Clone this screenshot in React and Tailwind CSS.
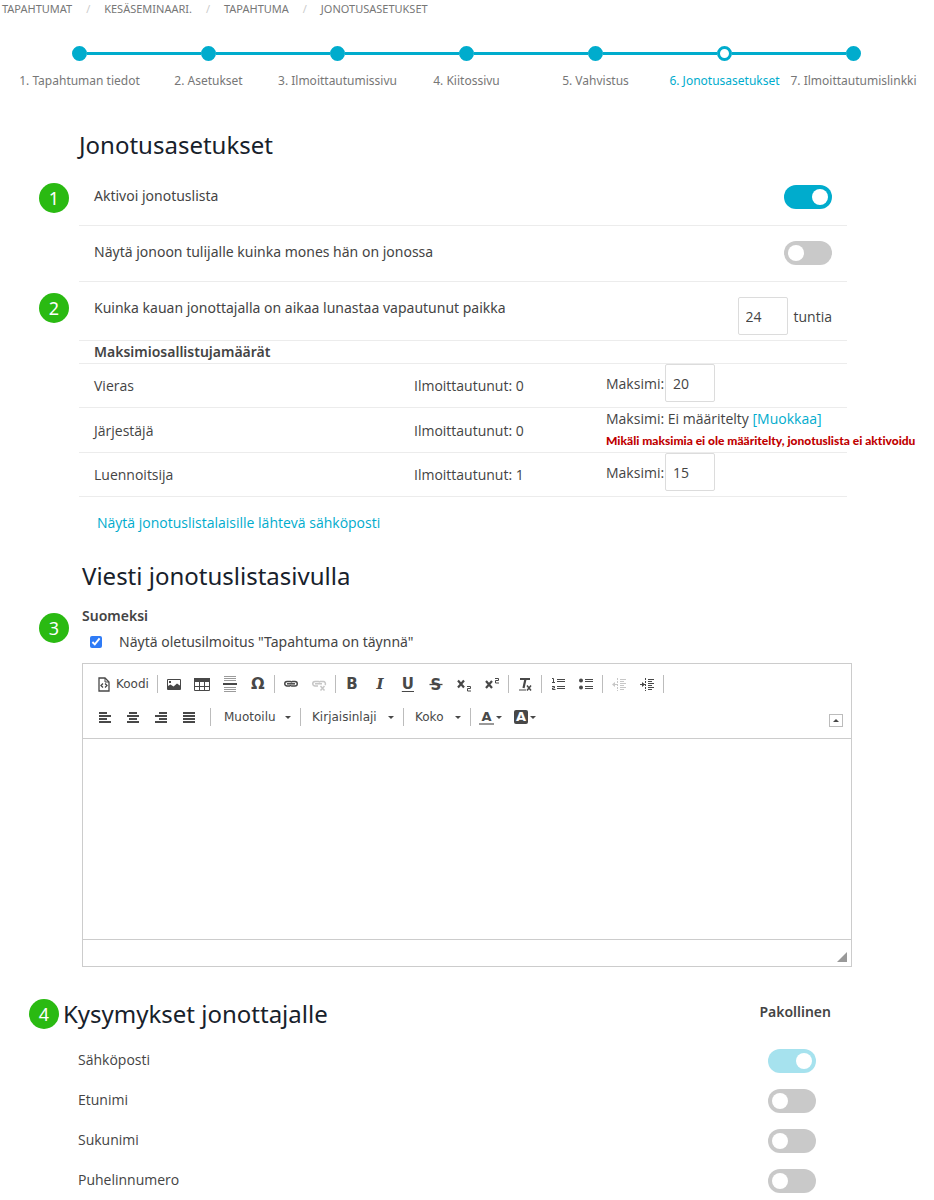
import { useState } from "react";
import clsx from "clsx";

const steps = [
  "1. Tapahtuman tiedot",
  "2. Asetukset",
  "3. Ilmoittautumissivu",
  "4. Kiitossivu",
  "5. Vahvistus",
  "6. Jonotusasetukset",
  "7. Ilmoittautumislinkki",
];
const currentStep = 5;

const crumbs = ["Tapahtumat", "Kesäseminaari.", "Tapahtuma", "Jonotusasetukset"];

const groups = [
  { id: "vieras", name: "Vieras", registered: 0, max: "20" },
  { id: "jarjestaja", name: "Järjestäjä", registered: 0, max: null },
  { id: "luennoitsija", name: "Luennoitsija", registered: 1, max: "15" },
];

const questions = [
  { id: "email", label: "Sähköposti", locked: true },
  { id: "firstname", label: "Etunimi" },
  { id: "lastname", label: "Sukunimi" },
  { id: "phone", label: "Puhelinnumero" },
];

const Badge = ({ children, className }) => (
  <span
    className={clsx(
      "flex size-[30px] shrink-0 items-center justify-center rounded-full bg-[#2aba12] text-lg text-white",
      className
    )}
  >
    {children}
  </span>
);

const Toggle = ({ id, defaultChecked, disabled }) => (
  <input
    id={id}
    type="checkbox"
    role="switch"
    defaultChecked={defaultChecked}
    disabled={disabled}
    className="h-6 w-12 shrink-0 appearance-none rounded-full bg-[#c9c9c9] p-1 before:block before:size-4 before:rounded-full before:bg-white checked:bg-[#00accd] checked:before:ml-6 disabled:bg-[#a6e2ee]"
  />
);

const NumberBox = ({ id, value }) => (
  <input
    id={id}
    type="text"
    inputMode="numeric"
    defaultValue={value}
    className="h-[38px] w-[50px] rounded-xs border border-[#dcdcdc] bg-white px-[7px]"
  />
);

const Breadcrumb = () => (
  <nav aria-label="Murupolku" className="pl-0.5">
    <ol className="flex text-[11px] leading-[18px] text-[#777] uppercase">
      {crumbs.map((c, i) => (
        <li key={c} className="flex">
          {i > 0 && <span className="w-8 text-center text-[#ccc]">/</span>}
          <a href="#">{c}</a>
        </li>
      ))}
    </ol>
  </nav>
);

const Stepper = () => (
  <ol className="mr-4 ml-[15px] mt-7 grid grid-cols-7">
    {steps.map((s, i) => (
      <li key={s} className="flex flex-col items-center">
        <div className="flex w-full items-center">
          <span className={clsx("h-[3px] flex-1", i > 0 && "bg-[#00accd]")} />
          <span
            className={clsx(
              "size-[15px] rounded-full border-3 border-[#00accd]",
              i === currentStep ? "bg-white" : "bg-[#00accd]"
            )}
          />
          <span
            className={clsx(
              "h-[3px] flex-1",
              i < steps.length - 1 && "bg-[#00accd]"
            )}
          />
        </div>
        <a
          href="#"
          aria-current={i === currentStep ? "step" : undefined}
          className={clsx(
            "mt-2.5 text-[12px] leading-5 whitespace-nowrap",
            i === currentStep ? "text-[#00accd]" : "text-[#777]"
          )}
        >
          {s}
        </a>
      </li>
    ))}
  </ol>
);

const SettingRow = ({ id, label, badge, badgeClass, children, className }) => (
  <div
    className={clsx(
      "relative flex items-start justify-between border-b border-[#ececec] px-[15px] pt-[15px]",
      className
    )}
  >
    {badge && (
      <Badge className={clsx("absolute -left-10", badgeClass)}>{badge}</Badge>
    )}
    <label htmlFor={id} className="text-[14px] leading-[22px]">
      {label}
    </label>
    {children}
  </div>
);

const GroupTable = () => (
  <table className="w-full table-fixed text-left text-[14px]">
    <thead>
      <tr className="border-b border-[#ececec]">
        <th className="w-5/12 px-[15px] py-0 leading-[22px] font-semibold">
          Maksimiosallistujamäärät
        </th>
        <th className="w-3/12" />
        <th className="w-4/12" />
      </tr>
    </thead>
    <tbody className="font-['Open_Sans',sans-serif]">
      {groups.map((g) => (
        <tr key={g.id} className="h-[44px] border-b border-[#ececec]">
          <td className="px-[15px]">{g.name}</td>
          <td className="px-[15px]">Ilmoittautunut: {g.registered}</td>
          <td className="pl-[15px] align-top whitespace-nowrap">
            {g.max ? (
              <div className="flex items-center gap-px">
                <label htmlFor={g.id}>Maksimi:</label>
                <NumberBox id={g.id} value={g.max} />
              </div>
            ) : (
              <>
                <p className="leading-[22px]">
                  Maksimi: Ei määritelty{" "}
                  <a href="#" className="text-[#00accd]">
                    [Muokkaa]
                  </a>
                </p>
                <p className="font-['Lato',sans-serif] text-[12px] leading-[22px] font-black text-[#c00000] [font-variant-ligatures:none]">
                  Mikäli maksimia ei ole määritelty, jonotuslista ei aktivoidu
                </p>
              </>
            )}
          </td>
        </tr>
      ))}
    </tbody>
  </table>
);

const Icon = ({ children }) => (
  <svg
    viewBox="0 0 16 16"
    className="size-4 shrink-0"
    fill="none"
    stroke="currentColor"
    aria-hidden="true"
  >
    {children}
  </svg>
);

const icons = {
  source: (
    <Icon>
      <path d="M3 2h6l4 4v9h-10z" strokeWidth="1.3" />
      <path d="M9 2v4h4" />
      <path d="M7 7.500l-2 2 2 2M9 7.500l2 2-2 2" strokeWidth="1.300" />
    </Icon>
  ),
  image: (
    <Icon>
      <path d="M1.500 3.500h13v10h-13z" />
      <path d="M2 13v-3l2.500-1.500 3 2 3.500-3 3.500 2.500v3z" fill="currentColor" stroke="none" />
      <path d="M3 5h2v2h-2z" fill="currentColor" stroke="none" />
    </Icon>
  ),
  table: (
    <Icon>
      <path d="M0 2h16v4h-16z" fill="currentColor" stroke="none" />
      <path d="M.5 3v11.500h15v-11.500M0 10.500h16M5.500 6v8.500M10.500 6v8.500" />
    </Icon>
  ),
  rule: (
    <Icon>
      <path d="M2 .5h12M2 2.500h12M2 4.500h12M2 11.500h12M2 13.500h12M2 15.500h12" strokeOpacity=".55" />
      <path d="M1 8h14" strokeWidth="2" />
    </Icon>
  ),
  link: (
    <Icon>
      <path d="M7 10h-3a2.200 2.200 0 0 1 0-4.500h3a2 2 0 0 1 2 1M9 5.500h3a2.200 2.200 0 0 1 0 4.500h-3a2 2 0 0 1-2-1" strokeWidth="1.500" />
      <path d="M4 7.800h8" strokeWidth="1.500" />
    </Icon>
  ),
  unlink: (
    <Icon>
      <path d="M7 10h-3a2.200 2.200 0 0 1 0-4.500h3a2 2 0 0 1 2 1M9 5.500h3a2.200 2.200 0 0 1 2 3.500M4 7.800h7" strokeWidth="1.500" />
      <path d="M9.500 10l4 4.500M13.500 10l-4 4.500" strokeWidth="1.500" />
    </Icon>
  ),
  strike: (
    <Icon>
      <text x="8" y="13.500" textAnchor="middle" fontSize="15" fontWeight="700" fill="currentColor" stroke="none">
        S
      </text>
      <path d="M1.500 8.500h13" strokeWidth="1.300" />
    </Icon>
  ),
  sub: (
    <Icon>
      <path d="M2 4.500l6 7M8 4.500l-6 7" strokeWidth="2.200" />
      <path d="M11 10.500h3.500v2h-3v2.500h3.500" />
    </Icon>
  ),
  sup: (
    <Icon>
      <path d="M2 5l6 7M8 5l-6 7" strokeWidth="2.200" />
      <path d="M11 2.500h3.500v2h-3v2.500h3.500" />
    </Icon>
  ),
  clear: (
    <Icon>
      <path d="M3 3h10M8.500 3l-2 9" strokeWidth="2.200" />
      <path d="M2 14h7" />
      <path d="M10 9.500l4 5M14 9.500l-4 5" strokeWidth="1.500" />
    </Icon>
  ),
  numbered: (
    <Icon>
      <path d="M2 2.500h1.500v4M2 6.500h3M2 10.500h2.500v1.500h-2v1.500h3M7 3.500h8M7 5.500h8M7 10.500h8M7 12.500h8" />
    </Icon>
  ),
  bulleted: (
    <Icon>
      <path d="M7 3.500h8M7 5.500h8M7 10.500h8M7 12.500h8" />
      <circle cx="3" cy="4.500" r="2" fill="currentColor" stroke="none" />
      <circle cx="3" cy="11.500" r="2" fill="currentColor" stroke="none" />
    </Icon>
  ),
  outdent: (
    <Icon>
      <path d="M9 3.500h6M9 5.500h4M9 7.500h6M9 9.500h4M9 11.500h6M9 13.500h4M2 8.500h5" />
      <path d="M6.500 2v13" strokeDasharray="2 1" />
      <path d="M1 8.500l3-2.500v5z" fill="currentColor" stroke="none" />
    </Icon>
  ),
  indent: (
    <Icon>
      <path d="M9 3.500h6M9 5.500h4M9 7.500h6M9 9.500h4M9 11.500h6M9 13.500h4M1 8.500h5" />
      <path d="M6.500 2v13" strokeDasharray="2 1" />
      <path d="M6 8.500l-3-2.500v5z" fill="currentColor" stroke="none" />
    </Icon>
  ),
  left: (
    <Icon>
      <path d="M3 4h8M3 7h12M3 10h8M3 13h12" strokeWidth="2" />
    </Icon>
  ),
  center: (
    <Icon>
      <path d="M5 4h8M3 7h12M5 10h8M3 13h12" strokeWidth="2" />
    </Icon>
  ),
  right: (
    <Icon>
      <path d="M7 4h8M3 7h12M7 10h8M3 13h12" strokeWidth="2" />
    </Icon>
  ),
  justify: (
    <Icon>
      <path d="M3 4h12M3 7h12M3 10h12M3 13h12" strokeWidth="2" />
    </Icon>
  ),
};

const Tool = ({ label, children, disabled, className }) => (
  <button
    type="button"
    aria-label={label}
    disabled={disabled}
    className={clsx(
      "flex h-7 min-w-7 items-center justify-center px-1.5 disabled:opacity-30",
      className
    )}
  >
    {children}
  </button>
);

const Sep = () => <span className="mx-0.5 h-[18px] w-px bg-[#bcbcbc]" />;

const Caret = () => (
  <svg viewBox="0 0 6 3" className="h-[3px] w-1.5" fill="currentColor" aria-hidden="true">
    <path d="M0 0h6l-3 3z" />
  </svg>
);

const Combo = ({ children, className }) => (
  <button
    type="button"
    className={clsx("flex h-7 items-center justify-between", className)}
  >
    {children}
    <Caret />
  </button>
);

const Toolbar = () => (
  <div className="flex flex-col gap-[5px] border-b border-[#ccc] px-[7px] pt-1.5 pb-[7px] font-['DejaVu_Sans',sans-serif] text-[12px] text-[#484848]">
    <div className="flex flex-wrap items-center">
      <Tool className="gap-1">
        {icons.source}
        Koodi
      </Tool>
      <Sep />
      <Tool label="Kuva">{icons.image}</Tool>
      <Tool label="Taulu">{icons.table}</Tool>
      <Tool label="Vaakaviiva">{icons.rule}</Tool>
      <Tool className="text-[16px] font-bold">Ω</Tool>
      <Sep />
      <Tool label="Linkki">{icons.link}</Tool>
      <Tool label="Poista linkki" disabled>
        {icons.unlink}
      </Tool>
      <Sep />
      <Tool className="text-[15px] font-bold">B</Tool>
      <Tool className="font-['DejaVu_Serif',serif] text-[15px] font-bold italic">I</Tool>
      <Tool className="text-[15px] font-bold underline underline-offset-2">U</Tool>
      <Tool label="Yliviivattu">{icons.strike}</Tool>
      <Tool label="Alaindeksi">{icons.sub}</Tool>
      <Tool label="Yläindeksi">{icons.sup}</Tool>
      <Sep />
      <Tool label="Poista muotoilu">{icons.clear}</Tool>
      <Sep />
      <Tool label="Numerointi">{icons.numbered}</Tool>
      <Tool label="Luettelomerkit">{icons.bulleted}</Tool>
      <Sep />
      <Tool label="Pienennä sisennystä" disabled>
        {icons.outdent}
      </Tool>
      <Tool label="Suurenna sisennystä">{icons.indent}</Tool>
      <Sep />
    </div>
    <div className="flex items-center">
      <Tool label="Tasaa vasemmalle">{icons.left}</Tool>
      <Tool label="Keskitä">{icons.center}</Tool>
      <Tool label="Tasaa oikealle">{icons.right}</Tool>
      <Tool label="Tasaa molemmat reunat">{icons.justify}</Tool>
      <span className="w-1.5" />
      <Sep />
      <Combo className="w-[85px] pr-[7px] pl-[11px]">Muotoilu</Combo>
      <Sep />
      <Combo className="w-[98px] pr-[7px] pl-[9px]">Kirjaisinlaji</Combo>
      <Sep />
      <Combo className="w-[62px] pr-[7px] pl-[9px]">Koko</Combo>
      <Sep />
      <Tool label="Tekstin väri" className="gap-0.5">
        <span className="h-[15px] w-[15px] border-b-2 border-[#999] text-center text-[13px] leading-[13px] font-bold">
          A
        </span>
        <Caret />
      </Tool>
      <Tool label="Taustaväri" className="gap-0.5">
        <span className="h-3.5 w-3.5 rounded-xs bg-[#484848] text-center text-[13px] leading-[14px] font-bold text-white">
          A
        </span>
        <Caret />
      </Tool>
      <button
        type="button"
        aria-label="Pienennä työkalupalkki"
        className="mt-1.5 mr-px ml-auto flex h-[13px] w-3.5 items-center justify-center border border-[#bcbcbc]"
      >
        <svg viewBox="0 0 6 3" className="h-[3px] w-1.5" fill="currentColor">
          <path d="M0 3h6l-3-3z" />
        </svg>
      </button>
    </div>
  </div>
);

const Editor = () => {
  const [message, setMessage] = useState("");

  return (
    <div className="border border-[#ccc]">
      <Toolbar />
      <textarea
        aria-label="Viesti suomeksi"
        value={message}
        onChange={(e) => setMessage(e.target.value)}
        className="block h-[200px] w-full resize-none p-5 outline-none"
      />
      <div className="flex h-[27px] items-end justify-end border-t border-[#ccc] p-1">
        <svg viewBox="0 0 10 10" className="size-2.5" fill="#999" aria-hidden="true">
          <path d="M10 0v10h-10z" />
        </svg>
      </div>
    </div>
  );
};

const App = () => (
  <div className="bg-white font-['Noto_Sans',sans-serif] text-[#444]">
    <Breadcrumb />
    <Stepper />

    <main>
      <section className="mt-[38px] pr-[87px] pl-[79px]">
        <h1 className="text-2xl text-[#17212b]">Jonotusasetukset</h1>
        <div className="mt-[9px]">
          <SettingRow
            id="queue"
            label="Aktivoi jonotuslista"
            badge="1"
            badgeClass="top-[13px]"
            className="h-14"
          >
            <Toggle id="queue" defaultChecked />
          </SettingRow>
          <SettingRow
            id="position"
            label="Näytä jonoon tulijalle kuinka mones hän on jonossa"
            className="h-14"
          >
            <Toggle id="position" />
          </SettingRow>
          <SettingRow
            id="hours"
            label="Kuinka kauan jonottajalla on aikaa lunastaa vapautunut paikka"
            badge="2"
            badgeClass="top-[11px]"
            className="h-[59px]"
          >
            <div className="flex items-center gap-1.5 font-['Open_Sans',sans-serif] text-[14px]">
              <NumberBox id="hours" value="24" />
              <span>tuntia</span>
            </div>
          </SettingRow>
          <GroupTable />
        </div>
        <a
          href="#"
          className="mt-[15px] ml-[18px] inline-block font-['Open_Sans',sans-serif] text-[14px] leading-[22px] text-[#00accd]"
        >
          Näytä jonotuslistalaisille lähtevä sähköposti
        </a>
      </section>

      <section className="mt-[26px] px-[82px]">
        <h2 className="text-2xl text-[#17212b]">Viesti jonotuslistasivulla</h2>
        <div className="relative mt-3">
          <Badge className="absolute top-[9px] -left-[43px]">3</Badge>
          <h3 className="text-[14px] leading-6 font-semibold">Suomeksi</h3>
          <div className="flex h-[27px] items-center gap-[17px] pl-2">
            <input
              id="default-message"
              type="checkbox"
              defaultChecked
              className="size-3 accent-[#2f7bf6]"
            />
            <label htmlFor="default-message" className="text-[14px] leading-[22px]">
              Näytä oletusilmoitus "Tapahtuma on täynnä"
            </label>
          </div>
        </div>
        <div className="mt-2">
          <Editor />
        </div>
      </section>

      <section className="mt-[31px]">
        <div className="flex items-start justify-between pr-[103px] pl-[29px]">
          <div className="flex items-center gap-1">
            <Badge>4</Badge>
            <h2 className="text-2xl text-[#17212b]">Kysymykset jonottajalle</h2>
          </div>
          <span className="text-[14px] leading-7 font-semibold">Pakollinen</span>
        </div>
        <ul className="mt-[19px] flex flex-col gap-4 pr-[118px] pl-[78px]">
          {questions.map((q) => (
            <li key={q.id} className="flex h-6 items-start justify-between">
              <label
                htmlFor={q.id}
                className="font-['Open_Sans',sans-serif] text-[14px] leading-[22px]"
              >
                {q.label}
              </label>
              <Toggle id={q.id} defaultChecked={q.locked} disabled={q.locked} />
            </li>
          ))}
        </ul>
      </section>
    </main>
  </div>
);

export default App;
